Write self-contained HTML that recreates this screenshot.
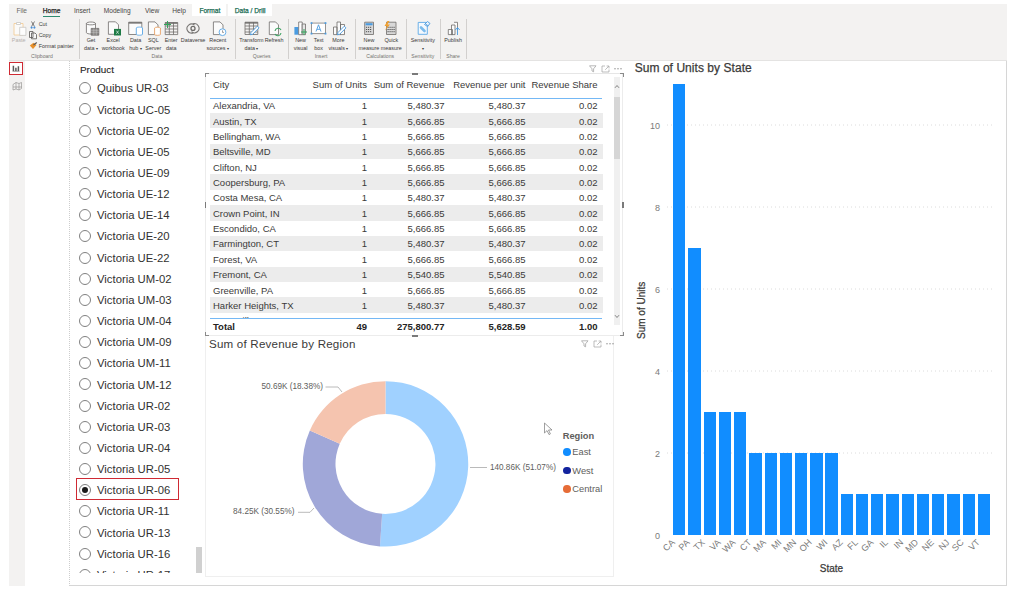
<!DOCTYPE html><html><head><meta charset="utf-8"><style>
*{box-sizing:border-box;margin:0;padding:0}
html,body{width:1024px;height:592px;overflow:hidden;background:#fff;font-family:"Liberation Sans",sans-serif;color:#252423}
.a{position:absolute;white-space:nowrap}
.rb{color:#605e5c}
small{font-size:70%}
</style></head><body>

<div class="a" style="left:9px;top:4px;width:998px;height:56px;background:#f3f2f1"></div>
<div class="a" style="left:192px;top:4px;width:34px;height:12px;background:#ffffff"></div>
<div class="a" style="left:228px;top:4px;width:44px;height:12px;background:#ffffff"></div>
<div class="a" style="left:16.4px;top:6.5px;font-size:6.6px;line-height:8px;color:#6b6967;">File</div>
<div class="a" style="left:42.8px;top:6.5px;font-size:6.6px;line-height:8px;color:#252423;-webkit-text-stroke:0.25px #252423;">Home</div>
<div class="a" style="left:73.9px;top:6.5px;font-size:6.6px;line-height:8px;color:#484644;">Insert</div>
<div class="a" style="left:103.8px;top:6.5px;font-size:6.6px;line-height:8px;color:#484644;">Modeling</div>
<div class="a" style="left:145px;top:6.5px;font-size:6.6px;line-height:8px;color:#484644;">View</div>
<div class="a" style="left:172.3px;top:6.5px;font-size:6.6px;line-height:8px;color:#484644;">Help</div>
<div class="a" style="left:199.4px;top:6.5px;font-size:6.6px;line-height:8px;color:#1c6e55;-webkit-text-stroke:0.25px #1c6e55;">Format</div>
<div class="a" style="left:234.8px;top:6.5px;font-size:6.6px;line-height:8px;color:#1c6e55;-webkit-text-stroke:0.25px #1c6e55;">Data / Drill</div>
<div class="a" style="left:43px;top:15.5px;width:17px;height:1.2px;background:#2e8b6f"></div>
<div class="a" style="left:9px;top:60px;width:998px;height:1px;background:#e4e3e2"></div>
<div class="a" style="left:78.5px;top:19px;width:0.6px;height:40px;background:#d2d0ce"></div>
<div class="a" style="left:235.3px;top:19px;width:0.6px;height:40px;background:#d2d0ce"></div>
<div class="a" style="left:287.7px;top:19px;width:0.6px;height:40px;background:#d2d0ce"></div>
<div class="a" style="left:354.6px;top:19px;width:0.6px;height:40px;background:#d2d0ce"></div>
<div class="a" style="left:405.7px;top:19px;width:0.6px;height:40px;background:#d2d0ce"></div>
<div class="a" style="left:439.6px;top:19px;width:0.6px;height:40px;background:#d2d0ce"></div>
<div class="a" style="left:466.4px;top:19px;width:0.6px;height:40px;background:#d2d0ce"></div>
<div class="a" style="left:-21.30px;width:80px;top:37.00px;font-size:5.4px;line-height:7px;text-align:center;color:#b3b0ad">Paste</div>
<div class="a" style="left:38.70px;top:21.40px;font-size:5.4px;line-height:7px;color:#3b3a39">Cut</div>
<div class="a" style="left:38.70px;top:32.30px;font-size:5.4px;line-height:7px;color:#3b3a39">Copy</div>
<div class="a" style="left:38.70px;top:42.80px;font-size:5.4px;line-height:7px;color:#3b3a39">Format painter</div>
<div class="a" style="left:2.00px;width:80px;top:53.40px;font-size:5.1px;line-height:7px;text-align:center;color:#747270">Clipboard</div>
<div class="a" style="left:51.00px;width:80px;top:37.10px;font-size:5.4px;line-height:7px;text-align:center;color:#3b3a39">Get</div>
<div class="a" style="left:51.00px;width:80px;top:44.50px;font-size:5.4px;line-height:7px;text-align:center;color:#3b3a39">data <small>▾</small></div>
<div class="a" style="left:73.20px;width:80px;top:37.10px;font-size:5.4px;line-height:7px;text-align:center;color:#3b3a39">Excel</div>
<div class="a" style="left:73.20px;width:80px;top:44.50px;font-size:5.4px;line-height:7px;text-align:center;color:#3b3a39">workbook</div>
<div class="a" style="left:95.60px;width:80px;top:37.10px;font-size:5.4px;line-height:7px;text-align:center;color:#3b3a39">Data</div>
<div class="a" style="left:95.60px;width:80px;top:44.50px;font-size:5.4px;line-height:7px;text-align:center;color:#3b3a39">hub <small>▾</small></div>
<div class="a" style="left:113.30px;width:80px;top:37.10px;font-size:5.4px;line-height:7px;text-align:center;color:#3b3a39">SQL</div>
<div class="a" style="left:113.30px;width:80px;top:44.50px;font-size:5.4px;line-height:7px;text-align:center;color:#3b3a39">Server</div>
<div class="a" style="left:131.20px;width:80px;top:37.10px;font-size:5.4px;line-height:7px;text-align:center;color:#3b3a39">Enter</div>
<div class="a" style="left:131.20px;width:80px;top:44.50px;font-size:5.4px;line-height:7px;text-align:center;color:#3b3a39">data</div>
<div class="a" style="left:153.10px;width:80px;top:37.10px;font-size:5.4px;line-height:7px;text-align:center;color:#3b3a39">Dataverse</div>
<div class="a" style="left:177.80px;width:80px;top:37.10px;font-size:5.4px;line-height:7px;text-align:center;color:#3b3a39">Recent</div>
<div class="a" style="left:177.80px;width:80px;top:44.50px;font-size:5.4px;line-height:7px;text-align:center;color:#3b3a39">sources <small>▾</small></div>
<div class="a" style="left:211.40px;width:80px;top:37.10px;font-size:5.4px;line-height:7px;text-align:center;color:#3b3a39">Transform</div>
<div class="a" style="left:211.40px;width:80px;top:44.50px;font-size:5.4px;line-height:7px;text-align:center;color:#3b3a39">data <small>▾</small></div>
<div class="a" style="left:234.10px;width:80px;top:37.10px;font-size:5.4px;line-height:7px;text-align:center;color:#3b3a39">Refresh</div>
<div class="a" style="left:260.60px;width:80px;top:37.10px;font-size:5.4px;line-height:7px;text-align:center;color:#3b3a39">New</div>
<div class="a" style="left:260.60px;width:80px;top:44.50px;font-size:5.4px;line-height:7px;text-align:center;color:#3b3a39">visual</div>
<div class="a" style="left:278.70px;width:80px;top:37.10px;font-size:5.4px;line-height:7px;text-align:center;color:#3b3a39">Text</div>
<div class="a" style="left:278.70px;width:80px;top:44.50px;font-size:5.4px;line-height:7px;text-align:center;color:#3b3a39">box</div>
<div class="a" style="left:298.40px;width:80px;top:37.10px;font-size:5.4px;line-height:7px;text-align:center;color:#3b3a39">More</div>
<div class="a" style="left:298.40px;width:80px;top:44.50px;font-size:5.4px;line-height:7px;text-align:center;color:#3b3a39">visuals <small>▾</small></div>
<div class="a" style="left:328.90px;width:80px;top:37.10px;font-size:5.4px;line-height:7px;text-align:center;color:#3b3a39">New</div>
<div class="a" style="left:328.90px;width:80px;top:44.50px;font-size:5.4px;line-height:7px;text-align:center;color:#3b3a39">measure</div>
<div class="a" style="left:351.30px;width:80px;top:37.10px;font-size:5.4px;line-height:7px;text-align:center;color:#3b3a39">Quick</div>
<div class="a" style="left:351.30px;width:80px;top:44.50px;font-size:5.4px;line-height:7px;text-align:center;color:#3b3a39">measure</div>
<div class="a" style="left:382.80px;width:80px;top:37.10px;font-size:5.4px;line-height:7px;text-align:center;color:#3b3a39">Sensitivity</div>
<div class="a" style="left:382.80px;width:80px;top:44.50px;font-size:5.4px;line-height:7px;text-align:center;color:#3b3a39"><small>▾</small></div>
<div class="a" style="left:413.10px;width:80px;top:37.10px;font-size:5.4px;line-height:7px;text-align:center;color:#3b3a39">Publish</div>
<div class="a" style="left:116.90px;width:80px;top:53.40px;font-size:5.1px;line-height:7px;text-align:center;color:#747270">Data</div>
<div class="a" style="left:221.60px;width:80px;top:53.40px;font-size:5.1px;line-height:7px;text-align:center;color:#747270">Queries</div>
<div class="a" style="left:281.00px;width:80px;top:53.40px;font-size:5.1px;line-height:7px;text-align:center;color:#747270">Insert</div>
<div class="a" style="left:340.20px;width:80px;top:53.40px;font-size:5.1px;line-height:7px;text-align:center;color:#747270">Calculations</div>
<div class="a" style="left:382.80px;width:80px;top:53.40px;font-size:5.1px;line-height:7px;text-align:center;color:#747270">Sensitivity</div>
<div class="a" style="left:413.10px;width:80px;top:53.40px;font-size:5.1px;line-height:7px;text-align:center;color:#747270">Share</div>
<svg class="a" style="left:0;top:0" width="480" height="62" viewBox="0 0 480 62" fill="none" stroke-width="0.8"><path d="M14 23.5 H23 V35 H14 Z" stroke="#f2c98f" fill="#fbfaf9"/><path d="M16.5 22.5 H20.5 V24.5 H16.5 Z" stroke="#c8c6c4" fill="#fff"/><path d="M19.7 27.3 H25.9 V35.4 H19.7 Z" stroke="#c8c6c4" fill="#fdfdfd"/><path d="M31.5 21.5 L34.5 26.5 M34.5 21.5 L31.5 26.5" stroke="#5a5856"/><circle cx="31.6" cy="27.6" r="1.1" fill="#4a90d9" stroke="none"/><circle cx="34.4" cy="27.6" r="1.1" fill="#4a90d9" stroke="none"/><path d="M29.5 31.5 H33 V37.5 H29.5 Z M31.5 33 H35 L36.5 34.5 V38.8 H31.5 Z" stroke="#5a5856" fill="#f8f8f8"/><path d="M29.8 45.5 L33 49 L36.5 45 L33.5 42.8 Z" fill="#e8912d" stroke="none"/><path d="M33.5 45 L36.8 42.5" stroke="#5a5856" stroke-width="1.1"/><path d="M86.4 23.5 V32.5 C86.4 34.5 95.5 34.5 95.5 32.5 V23.5 C95.5 21.5 86.4 21.5 86.4 23.5 Z" stroke="#6e6c6a" fill="#fbfbfb"/><path d="M86.4 23.5 C86.4 25.3 95.5 25.3 95.5 23.5" stroke="#6e6c6a"/><path d="M91.2 28.4 H98.8 V35.2 H91.2 Z" fill="#8a8886" stroke="#6e6c6a"/><path d="M91.2 30.3 H98.8 M91.2 32.3 H98.8 M93.8 28.4 V35.2 M96.3 28.4 V35.2" stroke="#d8d8d8" stroke-width="0.4"/><path d="M108.4 21.8 H115.5 L118.5 24.8 V34.3 H108.4 Z" stroke="#6e6c6a" fill="#fbfbfb"/><path d="M114 28.9 H121 V35.5 H114 Z" fill="#1d7a45" stroke="none"/><path d="M116.3 30.6 L118.7 33.8 M118.7 30.6 L116.3 33.8" stroke="#fff" stroke-width="0.6"/><path d="M128.7 22.2 H141.8 V34.5 H128.7 Z" stroke="#6e6c6a" fill="#fbfbfb"/><path d="M128.7 22.2 H141.8 V23.6 H128.7 Z" fill="#6e6c6a" stroke="none"/><path d="M136.3 28 V34.3 C136.3 35.5 142.5 35.5 142.5 34.3 V28 C142.5 26.8 136.3 26.8 136.3 28 Z" stroke="#5aa7e6" fill="#fff" stroke-width="0.9"/><path d="M148.4 21.9 H155 L158 24.9 V34.6 H148.4 Z" stroke="#6e6c6a" fill="#fbfbfb"/><path d="M154.6 28 V34.5 C154.6 35.6 160.4 35.6 160.4 34.5 V28 C160.4 26.9 154.6 26.9 154.6 28 Z" stroke="#e8a064" fill="#fff" stroke-width="0.9"/><path d="M165.2 22.5 H177.7 V34.6 H165.2 Z M165.2 26 H177.7 M165.2 29 H177.7 M165.2 32 H177.7 M169.3 22.5 V34.6 M173.5 22.5 V34.6" stroke="#6e6c6a" fill="none"/><path d="M165.2 22.5 H177.7 V23.8 H165.2 Z" fill="#6e6c6a" stroke="none"/><path d="M164 24.5 H171 M167.5 21 V28" stroke="#33a35a" stroke-width="1"/><path d="M194.56 25.08 A4.6 4.6 0 1 0 193.17 32.92" stroke="#7a7876" stroke-width="1.1"/><path d="M191.44 31.72 A4.6 4.6 0 1 0 192.83 23.88" stroke="#7a7876" stroke-width="1.1"/><circle cx="193" cy="28.4" r="2" stroke="#6e6c6a" stroke-width="1.3"/><path d="M213.4 21.9 H220 L223 24.9 V34.6 H213.4 Z" stroke="#6e6c6a" fill="#fbfbfb"/><circle cx="222.5" cy="32.2" r="3.4" stroke="#5aa7e6" fill="#fff" stroke-width="0.9"/><path d="M222.5 30.3 V32.4 H224" stroke="#444" stroke-width="0.5"/><path d="M245 22.2 H257.8 V34.5 H245 Z M245 26 H257.8 M245 29 H257.8 M245 32 H257.8 M249.3 22.2 V34.5 M253.5 22.2 V34.5" stroke="#6e6c6a"/><path d="M245 22.2 H257.8 V23.6 H245 Z" fill="#6e6c6a" stroke="none"/><path d="M250.5 34.8 L251 32.5 L257.3 26.2 L259 27.9 L252.7 34.2 Z" fill="#fff" stroke="#4a9be0" stroke-width="0.9"/><path d="M269.3 21.9 H275.5 L278.5 24.9 V34.6 H269.3 Z" stroke="#6e6c6a" fill="#fbfbfb"/><path d="M275 31 A3.2 3.2 0 0 1 281 30 M281 33 A3.2 3.2 0 0 1 275 34" stroke="#3fa365" stroke-width="1.1" fill="none"/><path d="M294.4 27 H298.7 V34.7 H294.4 Z" fill="#4a9be0" stroke="none"/><path d="M298.7 22 H302.2 V34.7 H298.7 Z" stroke="#6e6c6a" fill="#fff"/><path d="M302.2 24 H305.5 V34.7 H302.2 Z" stroke="#6e6c6a" fill="#e6e6e6"/><path d="M301 32 H307 M304 29 V35" stroke="#33a35a" stroke-width="1"/><path d="M311.5 23.1 H325.5 V33.6 H311.5 Z" stroke="#8a8886" fill="#fff" stroke-width="0.9"/><path d="M316 31.5 L318.5 24.8 L321 31.5 M317 29.3 H320" stroke="#4a9be0" stroke-width="0.9"/><rect x="310.6" y="22.2" width="1.8" height="1.8" fill="#4a9be0"/><rect x="324.6" y="22.2" width="1.8" height="1.8" fill="#4a9be0"/><rect x="310.6" y="32.7" width="1.8" height="1.8" fill="#4a9be0"/><rect x="324.6" y="32.7" width="1.8" height="1.8" fill="#4a9be0"/><path d="M333.5 27 H337 V34.6 H333.5 Z M337 22 H340.5 V34.6 H337 Z M340.5 24.5 H344.5 V34.6 H340.5 Z" stroke="#6e6c6a" fill="#fbfbfb"/><path d="M337.5 34.8 L338 32.5 L344.3 26.2 L346 27.9 L339.7 34.2 Z" fill="#fff" stroke="#4a9be0" stroke-width="0.9"/><path d="M364.7 22.2 H373.5 V34.5 H364.7 Z" stroke="#6e6c6a" fill="#d8d8d8"/><path d="M365.6 23.2 H372.6 V25.3 H365.6 Z" fill="#4a9be0" stroke="none"/><path d="M366 27.3 H372 M366 29.5 H372 M366 31.7 H372" stroke="#444" stroke-width="0.9" stroke-dasharray="1.2 0.8"/><path d="M386.5 22.2 H396 V34.5 H386.5 Z" stroke="#6e6c6a" fill="#d8d8d8"/><path d="M387.5 27.3 H395 M387.5 29.5 H395 M387.5 31.7 H395" stroke="#444" stroke-width="0.9" stroke-dasharray="1.2 0.8"/><path d="M387.5 21 L384.5 26 H387 L385 30.5 L390 24.5 H387.5 L389.5 21 Z" fill="#f0a030" stroke="none"/><path d="M418.2 22.4 H427.3 V34.3 H418.2 Z" stroke="#6ab0e8" fill="#f4f9fd" stroke-width="1"/><path d="M421 27.5 L424.5 31" stroke="#7cbcec" stroke-width="2.6" stroke-linecap="round"/><path d="M424.5 24.5 L427.5 21.5 L430 23.5 L427.5 26.5 Z" stroke="#4a9be0" stroke-width="0.9" fill="#e8f3fc"/><path d="M425.5 23.8 L428.3 26" stroke="#3a8bd0" stroke-width="0.7"/><path d="M448.3 29.5 H452.5 V34.6 H448.3 Z M451.5 25 H455 V34.6 H451.5 Z M454 22.3 H457.5 V30" stroke="#6e6c6a" fill="#fbfbfb"/><path d="M457.5 35 V28 M455.3 30 L457.5 27.5 L459.7 30" stroke="#4a9be0" stroke-width="0.9"/></svg>
<div class="a" style="left:9px;top:61px;width:16px;height:525px;background:#f3f2f1"></div>
<div class="a" style="left:9px;top:62px;width:14px;height:13px;border:1.6px solid #cf2a33;background:#fff"></div>
<svg class="a" style="left:10px;top:63px" width="14" height="32" viewBox="0 0 14 32"><path d="M3.4 2.8 V8 M5.9 4.8 V8 M8.4 3.3 V8" stroke="#5a5a5a" stroke-width="1.5"/><path d="M2.5 8.3 H9.5" stroke="#5a5a5a" stroke-width="0.6"/><path d="M3 21.5 L6 19.5 L9 20.5 L11.5 19.5 V25.5 L9 27 L6 26 L3 27 Z M6 19.5 V26 M9 20.5 V27 M3 24 H11.5" stroke="#8a8886" stroke-width="0.6" fill="none"/></svg>
<div class="a" style="left:69px;top:61px;width:938px;height:525px;border-left:1px dotted #cdcdcd;border-right:1px solid #d6d6d6;border-bottom:1px solid #d6d6d6"></div>
<div class="a" style="left:80px;top:64px;font-size:9.9px;line-height:11px;-webkit-text-stroke:0.1px #252423;color:#252423">Product</div>
<div class="a" style="left:70px;top:76px;width:130px;height:497px;overflow:hidden">
<div class="a" style="left:9px;top:6.30px;width:12px;height:12px;border-radius:50%;border:1px solid #808080"></div>
<div class="a" style="left:27px;top:5.40px;font-size:11.3px;line-height:14px;color:#323130">Quibus UR-03</div>
<div class="a" style="left:9px;top:27.45px;width:12px;height:12px;border-radius:50%;border:1px solid #808080"></div>
<div class="a" style="left:27px;top:26.55px;font-size:11.3px;line-height:14px;color:#323130">Victoria UC-05</div>
<div class="a" style="left:9px;top:48.60px;width:12px;height:12px;border-radius:50%;border:1px solid #808080"></div>
<div class="a" style="left:27px;top:47.70px;font-size:11.3px;line-height:14px;color:#323130">Victoria UE-02</div>
<div class="a" style="left:9px;top:69.75px;width:12px;height:12px;border-radius:50%;border:1px solid #808080"></div>
<div class="a" style="left:27px;top:68.85px;font-size:11.3px;line-height:14px;color:#323130">Victoria UE-05</div>
<div class="a" style="left:9px;top:90.90px;width:12px;height:12px;border-radius:50%;border:1px solid #808080"></div>
<div class="a" style="left:27px;top:90.00px;font-size:11.3px;line-height:14px;color:#323130">Victoria UE-09</div>
<div class="a" style="left:9px;top:112.05px;width:12px;height:12px;border-radius:50%;border:1px solid #808080"></div>
<div class="a" style="left:27px;top:111.15px;font-size:11.3px;line-height:14px;color:#323130">Victoria UE-12</div>
<div class="a" style="left:9px;top:133.20px;width:12px;height:12px;border-radius:50%;border:1px solid #808080"></div>
<div class="a" style="left:27px;top:132.30px;font-size:11.3px;line-height:14px;color:#323130">Victoria UE-14</div>
<div class="a" style="left:9px;top:154.35px;width:12px;height:12px;border-radius:50%;border:1px solid #808080"></div>
<div class="a" style="left:27px;top:153.45px;font-size:11.3px;line-height:14px;color:#323130">Victoria UE-20</div>
<div class="a" style="left:9px;top:175.50px;width:12px;height:12px;border-radius:50%;border:1px solid #808080"></div>
<div class="a" style="left:27px;top:174.60px;font-size:11.3px;line-height:14px;color:#323130">Victoria UE-22</div>
<div class="a" style="left:9px;top:196.65px;width:12px;height:12px;border-radius:50%;border:1px solid #808080"></div>
<div class="a" style="left:27px;top:195.75px;font-size:11.3px;line-height:14px;color:#323130">Victoria UM-02</div>
<div class="a" style="left:9px;top:217.80px;width:12px;height:12px;border-radius:50%;border:1px solid #808080"></div>
<div class="a" style="left:27px;top:216.90px;font-size:11.3px;line-height:14px;color:#323130">Victoria UM-03</div>
<div class="a" style="left:9px;top:238.95px;width:12px;height:12px;border-radius:50%;border:1px solid #808080"></div>
<div class="a" style="left:27px;top:238.05px;font-size:11.3px;line-height:14px;color:#323130">Victoria UM-04</div>
<div class="a" style="left:9px;top:260.10px;width:12px;height:12px;border-radius:50%;border:1px solid #808080"></div>
<div class="a" style="left:27px;top:259.20px;font-size:11.3px;line-height:14px;color:#323130">Victoria UM-09</div>
<div class="a" style="left:9px;top:281.25px;width:12px;height:12px;border-radius:50%;border:1px solid #808080"></div>
<div class="a" style="left:27px;top:280.35px;font-size:11.3px;line-height:14px;color:#323130">Victoria UM-11</div>
<div class="a" style="left:9px;top:302.40px;width:12px;height:12px;border-radius:50%;border:1px solid #808080"></div>
<div class="a" style="left:27px;top:301.50px;font-size:11.3px;line-height:14px;color:#323130">Victoria UM-12</div>
<div class="a" style="left:9px;top:323.55px;width:12px;height:12px;border-radius:50%;border:1px solid #808080"></div>
<div class="a" style="left:27px;top:322.65px;font-size:11.3px;line-height:14px;color:#323130">Victoria UR-02</div>
<div class="a" style="left:9px;top:344.70px;width:12px;height:12px;border-radius:50%;border:1px solid #808080"></div>
<div class="a" style="left:27px;top:343.80px;font-size:11.3px;line-height:14px;color:#323130">Victoria UR-03</div>
<div class="a" style="left:9px;top:365.85px;width:12px;height:12px;border-radius:50%;border:1px solid #808080"></div>
<div class="a" style="left:27px;top:364.95px;font-size:11.3px;line-height:14px;color:#323130">Victoria UR-04</div>
<div class="a" style="left:9px;top:387.00px;width:12px;height:12px;border-radius:50%;border:1px solid #808080"></div>
<div class="a" style="left:27px;top:386.10px;font-size:11.3px;line-height:14px;color:#323130">Victoria UR-05</div>
<div class="a" style="left:9px;top:408.15px;width:12px;height:12px;border-radius:50%;border:1px solid #808080"></div>
<div class="a" style="left:12px;top:411.15px;width:6px;height:6px;border-radius:50%;background:#1b1b1b"></div>
<div class="a" style="left:27px;top:407.25px;font-size:11.3px;line-height:14px;color:#323130">Victoria UR-06</div>
<div class="a" style="left:9px;top:429.30px;width:12px;height:12px;border-radius:50%;border:1px solid #808080"></div>
<div class="a" style="left:27px;top:428.40px;font-size:11.3px;line-height:14px;color:#323130">Victoria UR-11</div>
<div class="a" style="left:9px;top:450.45px;width:12px;height:12px;border-radius:50%;border:1px solid #808080"></div>
<div class="a" style="left:27px;top:449.55px;font-size:11.3px;line-height:14px;color:#323130">Victoria UR-13</div>
<div class="a" style="left:9px;top:471.60px;width:12px;height:12px;border-radius:50%;border:1px solid #808080"></div>
<div class="a" style="left:27px;top:470.70px;font-size:11.3px;line-height:14px;color:#323130">Victoria UR-16</div>
<div class="a" style="left:9px;top:492.75px;width:12px;height:12px;border-radius:50%;border:1px solid #808080"></div>
<div class="a" style="left:27px;top:491.85px;font-size:11.3px;line-height:14px;color:#323130">Victoria UR-17</div>
</div>
<div class="a" style="left:76.3px;top:478.2px;width:103px;height:22px;border:1.6px solid #cf2a33"></div>
<div class="a" style="left:195.6px;top:547px;width:6px;height:25.7px;background:#d0d0d0"></div>
<div class="a" style="left:205px;top:73px;width:418px;height:263px;border:1px solid #ececec;border-top-color:#e6e6e6"></div>
<div class="a" style="left:204.5px;top:73px;width:4px;height:4px;border-left:1.3px solid #8a8a8a;border-top:1.3px solid #8a8a8a"></div>
<div class="a" style="left:619.5px;top:73px;width:4px;height:4px;border-right:1.3px solid #8a8a8a;border-top:1.3px solid #8a8a8a"></div>
<div class="a" style="left:204.5px;top:332px;width:4px;height:4px;border-left:1.3px solid #8a8a8a;border-bottom:1.3px solid #8a8a8a"></div>
<div class="a" style="left:619.5px;top:332px;width:4px;height:4px;border-right:1.3px solid #8a8a8a;border-bottom:1.3px solid #8a8a8a"></div>
<div class="a" style="left:411.6px;top:73.2px;width:6px;height:1.6px;background:#7a7a7a"></div>
<div class="a" style="left:411.6px;top:335.2px;width:6px;height:1.6px;background:#7a7a7a"></div>
<div class="a" style="left:204.7px;top:202.4px;width:1.6px;height:5.5px;background:#7a7a7a"></div>
<div class="a" style="left:622.4px;top:202.4px;width:1.6px;height:5.5px;background:#7a7a7a"></div>
<svg class="a" style="left:589px;top:65px" width="34" height="8" viewBox="0 0 34 8"><path d="M0.5 0.8 H7 L4.6 3.8 V6.8 L3 6 V3.8 Z" fill="none" stroke="#9a9a9a" stroke-width="0.7"/><path d="M16 1 H13 V7 H20 V4.5" fill="none" stroke="#a0a0a0" stroke-width="0.7"/><path d="M16.2 4.8 L19.8 1.2 M17.6 1 H20 V3.4" fill="none" stroke="#a0a0a0" stroke-width="0.7"/><circle cx="26" cy="3.8" r="0.7" fill="#8a8a8a"/><circle cx="29" cy="3.8" r="0.7" fill="#8a8a8a"/><circle cx="32" cy="3.8" r="0.7" fill="#8a8a8a"/></svg>
<div class="a" style="left:213px;top:79.2px;font-size:9.5px;line-height:11px;color:#3b3a39;">City</div>
<div class="a" style="right:657px;top:79.2px;font-size:9.5px;line-height:11px;color:#3b3a39;text-align:right;">Sum of Units</div>
<div class="a" style="right:579.5px;top:79.2px;font-size:9.5px;line-height:11px;color:#3b3a39;text-align:right;">Sum of Revenue</div>
<div class="a" style="right:498.5px;top:79.2px;font-size:9.5px;line-height:11px;color:#3b3a39;text-align:right;">Revenue per unit</div>
<div class="a" style="right:426.5px;top:79.2px;font-size:9.5px;line-height:11px;color:#3b3a39;text-align:right;">Revenue Share</div>
<div class="a" style="left:209.5px;top:97.6px;width:392.5px;height:1.2px;background:#74b8f5"></div>
<div class="a" style="left:209.5px;top:98.8px;width:393px;height:219.4px;overflow:hidden">
<div class="a" style="left:3.5px;top:1.55px;font-size:9.5px;line-height:11px;color:#3b3a39">Alexandria, VA</div>
<div class="a" style="right:235.5px;top:1.55px;font-size:9.5px;line-height:11px;color:#3b3a39;text-align:right">1</div>
<div class="a" style="right:158.0px;top:1.55px;font-size:9.5px;line-height:11px;color:#3b3a39;text-align:right">5,480.37</div>
<div class="a" style="right:77.0px;top:1.55px;font-size:9.5px;line-height:11px;color:#3b3a39;text-align:right">5,480.37</div>
<div class="a" style="right:5.0px;top:1.55px;font-size:9.5px;line-height:11px;color:#3b3a39;text-align:right">0.02</div>
<div class="a" style="left:0;top:14.30px;width:393px;height:15.35px;background:#ececec"></div>
<div class="a" style="left:3.5px;top:16.90px;font-size:9.5px;line-height:11px;color:#3b3a39">Austin, TX</div>
<div class="a" style="right:235.5px;top:16.90px;font-size:9.5px;line-height:11px;color:#3b3a39;text-align:right">1</div>
<div class="a" style="right:158.0px;top:16.90px;font-size:9.5px;line-height:11px;color:#3b3a39;text-align:right">5,666.85</div>
<div class="a" style="right:77.0px;top:16.90px;font-size:9.5px;line-height:11px;color:#3b3a39;text-align:right">5,666.85</div>
<div class="a" style="right:5.0px;top:16.90px;font-size:9.5px;line-height:11px;color:#3b3a39;text-align:right">0.02</div>
<div class="a" style="left:3.5px;top:32.25px;font-size:9.5px;line-height:11px;color:#3b3a39">Bellingham, WA</div>
<div class="a" style="right:235.5px;top:32.25px;font-size:9.5px;line-height:11px;color:#3b3a39;text-align:right">1</div>
<div class="a" style="right:158.0px;top:32.25px;font-size:9.5px;line-height:11px;color:#3b3a39;text-align:right">5,666.85</div>
<div class="a" style="right:77.0px;top:32.25px;font-size:9.5px;line-height:11px;color:#3b3a39;text-align:right">5,666.85</div>
<div class="a" style="right:5.0px;top:32.25px;font-size:9.5px;line-height:11px;color:#3b3a39;text-align:right">0.02</div>
<div class="a" style="left:0;top:45.00px;width:393px;height:15.35px;background:#ececec"></div>
<div class="a" style="left:3.5px;top:47.60px;font-size:9.5px;line-height:11px;color:#3b3a39">Beltsville, MD</div>
<div class="a" style="right:235.5px;top:47.60px;font-size:9.5px;line-height:11px;color:#3b3a39;text-align:right">1</div>
<div class="a" style="right:158.0px;top:47.60px;font-size:9.5px;line-height:11px;color:#3b3a39;text-align:right">5,666.85</div>
<div class="a" style="right:77.0px;top:47.60px;font-size:9.5px;line-height:11px;color:#3b3a39;text-align:right">5,666.85</div>
<div class="a" style="right:5.0px;top:47.60px;font-size:9.5px;line-height:11px;color:#3b3a39;text-align:right">0.02</div>
<div class="a" style="left:3.5px;top:62.95px;font-size:9.5px;line-height:11px;color:#3b3a39">Clifton, NJ</div>
<div class="a" style="right:235.5px;top:62.95px;font-size:9.5px;line-height:11px;color:#3b3a39;text-align:right">1</div>
<div class="a" style="right:158.0px;top:62.95px;font-size:9.5px;line-height:11px;color:#3b3a39;text-align:right">5,666.85</div>
<div class="a" style="right:77.0px;top:62.95px;font-size:9.5px;line-height:11px;color:#3b3a39;text-align:right">5,666.85</div>
<div class="a" style="right:5.0px;top:62.95px;font-size:9.5px;line-height:11px;color:#3b3a39;text-align:right">0.02</div>
<div class="a" style="left:0;top:75.70px;width:393px;height:15.35px;background:#ececec"></div>
<div class="a" style="left:3.5px;top:78.30px;font-size:9.5px;line-height:11px;color:#3b3a39">Coopersburg, PA</div>
<div class="a" style="right:235.5px;top:78.30px;font-size:9.5px;line-height:11px;color:#3b3a39;text-align:right">1</div>
<div class="a" style="right:158.0px;top:78.30px;font-size:9.5px;line-height:11px;color:#3b3a39;text-align:right">5,666.85</div>
<div class="a" style="right:77.0px;top:78.30px;font-size:9.5px;line-height:11px;color:#3b3a39;text-align:right">5,666.85</div>
<div class="a" style="right:5.0px;top:78.30px;font-size:9.5px;line-height:11px;color:#3b3a39;text-align:right">0.02</div>
<div class="a" style="left:3.5px;top:93.65px;font-size:9.5px;line-height:11px;color:#3b3a39">Costa Mesa, CA</div>
<div class="a" style="right:235.5px;top:93.65px;font-size:9.5px;line-height:11px;color:#3b3a39;text-align:right">1</div>
<div class="a" style="right:158.0px;top:93.65px;font-size:9.5px;line-height:11px;color:#3b3a39;text-align:right">5,480.37</div>
<div class="a" style="right:77.0px;top:93.65px;font-size:9.5px;line-height:11px;color:#3b3a39;text-align:right">5,480.37</div>
<div class="a" style="right:5.0px;top:93.65px;font-size:9.5px;line-height:11px;color:#3b3a39;text-align:right">0.02</div>
<div class="a" style="left:0;top:106.40px;width:393px;height:15.35px;background:#ececec"></div>
<div class="a" style="left:3.5px;top:109.00px;font-size:9.5px;line-height:11px;color:#3b3a39">Crown Point, IN</div>
<div class="a" style="right:235.5px;top:109.00px;font-size:9.5px;line-height:11px;color:#3b3a39;text-align:right">1</div>
<div class="a" style="right:158.0px;top:109.00px;font-size:9.5px;line-height:11px;color:#3b3a39;text-align:right">5,666.85</div>
<div class="a" style="right:77.0px;top:109.00px;font-size:9.5px;line-height:11px;color:#3b3a39;text-align:right">5,666.85</div>
<div class="a" style="right:5.0px;top:109.00px;font-size:9.5px;line-height:11px;color:#3b3a39;text-align:right">0.02</div>
<div class="a" style="left:3.5px;top:124.35px;font-size:9.5px;line-height:11px;color:#3b3a39">Escondido, CA</div>
<div class="a" style="right:235.5px;top:124.35px;font-size:9.5px;line-height:11px;color:#3b3a39;text-align:right">1</div>
<div class="a" style="right:158.0px;top:124.35px;font-size:9.5px;line-height:11px;color:#3b3a39;text-align:right">5,666.85</div>
<div class="a" style="right:77.0px;top:124.35px;font-size:9.5px;line-height:11px;color:#3b3a39;text-align:right">5,666.85</div>
<div class="a" style="right:5.0px;top:124.35px;font-size:9.5px;line-height:11px;color:#3b3a39;text-align:right">0.02</div>
<div class="a" style="left:0;top:137.10px;width:393px;height:15.35px;background:#ececec"></div>
<div class="a" style="left:3.5px;top:139.70px;font-size:9.5px;line-height:11px;color:#3b3a39">Farmington, CT</div>
<div class="a" style="right:235.5px;top:139.70px;font-size:9.5px;line-height:11px;color:#3b3a39;text-align:right">1</div>
<div class="a" style="right:158.0px;top:139.70px;font-size:9.5px;line-height:11px;color:#3b3a39;text-align:right">5,480.37</div>
<div class="a" style="right:77.0px;top:139.70px;font-size:9.5px;line-height:11px;color:#3b3a39;text-align:right">5,480.37</div>
<div class="a" style="right:5.0px;top:139.70px;font-size:9.5px;line-height:11px;color:#3b3a39;text-align:right">0.02</div>
<div class="a" style="left:3.5px;top:155.05px;font-size:9.5px;line-height:11px;color:#3b3a39">Forest, VA</div>
<div class="a" style="right:235.5px;top:155.05px;font-size:9.5px;line-height:11px;color:#3b3a39;text-align:right">1</div>
<div class="a" style="right:158.0px;top:155.05px;font-size:9.5px;line-height:11px;color:#3b3a39;text-align:right">5,666.85</div>
<div class="a" style="right:77.0px;top:155.05px;font-size:9.5px;line-height:11px;color:#3b3a39;text-align:right">5,666.85</div>
<div class="a" style="right:5.0px;top:155.05px;font-size:9.5px;line-height:11px;color:#3b3a39;text-align:right">0.02</div>
<div class="a" style="left:0;top:167.80px;width:393px;height:15.35px;background:#ececec"></div>
<div class="a" style="left:3.5px;top:170.40px;font-size:9.5px;line-height:11px;color:#3b3a39">Fremont, CA</div>
<div class="a" style="right:235.5px;top:170.40px;font-size:9.5px;line-height:11px;color:#3b3a39;text-align:right">1</div>
<div class="a" style="right:158.0px;top:170.40px;font-size:9.5px;line-height:11px;color:#3b3a39;text-align:right">5,540.85</div>
<div class="a" style="right:77.0px;top:170.40px;font-size:9.5px;line-height:11px;color:#3b3a39;text-align:right">5,540.85</div>
<div class="a" style="right:5.0px;top:170.40px;font-size:9.5px;line-height:11px;color:#3b3a39;text-align:right">0.02</div>
<div class="a" style="left:3.5px;top:185.75px;font-size:9.5px;line-height:11px;color:#3b3a39">Greenville, PA</div>
<div class="a" style="right:235.5px;top:185.75px;font-size:9.5px;line-height:11px;color:#3b3a39;text-align:right">1</div>
<div class="a" style="right:158.0px;top:185.75px;font-size:9.5px;line-height:11px;color:#3b3a39;text-align:right">5,666.85</div>
<div class="a" style="right:77.0px;top:185.75px;font-size:9.5px;line-height:11px;color:#3b3a39;text-align:right">5,666.85</div>
<div class="a" style="right:5.0px;top:185.75px;font-size:9.5px;line-height:11px;color:#3b3a39;text-align:right">0.02</div>
<div class="a" style="left:0;top:198.50px;width:393px;height:15.35px;background:#ececec"></div>
<div class="a" style="left:3.5px;top:201.10px;font-size:9.5px;line-height:11px;color:#3b3a39">Harker Heights, TX</div>
<div class="a" style="right:235.5px;top:201.10px;font-size:9.5px;line-height:11px;color:#3b3a39;text-align:right">1</div>
<div class="a" style="right:158.0px;top:201.10px;font-size:9.5px;line-height:11px;color:#3b3a39;text-align:right">5,480.37</div>
<div class="a" style="right:77.0px;top:201.10px;font-size:9.5px;line-height:11px;color:#3b3a39;text-align:right">5,480.37</div>
<div class="a" style="right:5.0px;top:201.10px;font-size:9.5px;line-height:11px;color:#3b3a39;text-align:right">0.02</div>
<div class="a" style="left:3.5px;top:216.45px;font-size:9.5px;line-height:11px;color:#3b3a39">Huntsville, AL</div>
<div class="a" style="right:235.5px;top:216.45px;font-size:9.5px;line-height:11px;color:#3b3a39;text-align:right">1</div>
<div class="a" style="right:158.0px;top:216.45px;font-size:9.5px;line-height:11px;color:#3b3a39;text-align:right">5,666.85</div>
<div class="a" style="right:77.0px;top:216.45px;font-size:9.5px;line-height:11px;color:#3b3a39;text-align:right">5,666.85</div>
<div class="a" style="right:5.0px;top:216.45px;font-size:9.5px;line-height:11px;color:#3b3a39;text-align:right">0.02</div>
</div>
<div class="a" style="left:209.5px;top:318px;width:392.5px;height:1.2px;background:#74b8f5"></div>
<div class="a" style="left:213px;top:321px;font-size:9.5px;line-height:11px;color:#252423;font-weight:bold;">Total</div>
<div class="a" style="right:657px;top:321px;font-size:9.5px;line-height:11px;color:#252423;text-align:right;font-weight:bold;">49</div>
<div class="a" style="right:579.5px;top:321px;font-size:9.5px;line-height:11px;color:#252423;text-align:right;font-weight:bold;">275,800.77</div>
<div class="a" style="right:498.5px;top:321px;font-size:9.5px;line-height:11px;color:#252423;text-align:right;font-weight:bold;">5,628.59</div>
<div class="a" style="right:426.5px;top:321px;font-size:9.5px;line-height:11px;color:#252423;text-align:right;font-weight:bold;">1.00</div>
<div class="a" style="left:614px;top:77px;width:6px;height:248px;background:#f0f0f0"></div>
<div class="a" style="left:614px;top:97px;width:6px;height:62px;background:#d6d6d6"></div>
<svg class="a" style="left:614px;top:84px" width="6" height="5" viewBox="0 0 6 5"><path d="M1 3.8 L3 1.5 L5 3.8" fill="none" stroke="#666" stroke-width="0.8"/></svg>
<svg class="a" style="left:614px;top:314px" width="6" height="5" viewBox="0 0 6 5"><path d="M1 1.2 L3 3.5 L5 1.2" fill="none" stroke="#666" stroke-width="0.8"/></svg>
<div class="a" style="left:205px;top:336px;width:408.5px;height:241px;border-left:1px solid #efefef;border-right:1px solid #efefef;border-bottom:1px solid #efefef"></div>
<div class="a" style="left:209px;top:336.6px;font-size:11.6px;line-height:13px;letter-spacing:0.2px;color:#3b3a39">Sum of Revenue by Region</div>
<svg class="a" style="left:581px;top:340px" width="34" height="8" viewBox="0 0 34 8"><path d="M0.5 0.8 H7 L4.6 3.8 V6.8 L3 6 V3.8 Z" fill="none" stroke="#9a9a9a" stroke-width="0.7"/><path d="M16 1 H13 V7 H20 V4.5" fill="none" stroke="#a0a0a0" stroke-width="0.7"/><path d="M16.2 4.8 L19.8 1.2 M17.6 1 H20 V3.4" fill="none" stroke="#a0a0a0" stroke-width="0.7"/><circle cx="26" cy="3.8" r="0.7" fill="#8a8a8a"/><circle cx="29" cy="3.8" r="0.7" fill="#8a8a8a"/><circle cx="32" cy="3.8" r="0.7" fill="#8a8a8a"/></svg>
<svg class="a" style="left:0;top:0" width="1024" height="592" viewBox="0 0 1024 592"><path d="M385.50 381.20 A82.7 82.7 0 1 1 379.94 546.41 L382.14 513.79 A50 50 0 1 0 385.50 413.90 Z" fill="#a0d1ff"/><path d="M379.94 546.41 A82.7 82.7 0 0 1 309.85 430.48 L339.76 443.70 A50 50 0 0 0 382.14 513.79 Z" fill="#a0a7d8"/><path d="M309.85 430.48 A82.7 82.7 0 0 1 385.50 381.20 L385.50 413.90 A50 50 0 0 0 339.76 443.70 Z" fill="#f5c4af"/><path d="M325.5 387 H338 L342 392" fill="none" stroke="#a8a8a8" stroke-width="0.8"/><path d="M298 512.3 H310 L314 508" fill="none" stroke="#a8a8a8" stroke-width="0.8"/><path d="M470 467.5 H487" fill="none" stroke="#a8a8a8" stroke-width="0.8"/></svg>
<div class="a" style="left:261.5px;top:382px;font-size:8.2px;line-height:10px;color:#605e5c">50.69K (18.38%)</div>
<div class="a" style="left:233px;top:507.3px;font-size:8.2px;line-height:10px;color:#605e5c">84.25K (30.55%)</div>
<div class="a" style="left:489.9px;top:462.5px;font-size:8.2px;line-height:10px;color:#605e5c">140.86K (51.07%)</div>
<div class="a" style="left:562.7px;top:431px;font-size:9.3px;line-height:11px;font-weight:bold;color:#605e5c">Region</div>
<div class="a" style="left:563.1px;top:448.10px;width:7.6px;height:7.6px;border-radius:50%;background:#118dff"></div>
<div class="a" style="left:572.3px;top:447.10px;font-size:9.3px;line-height:11px;color:#605e5c">East</div>
<div class="a" style="left:563.1px;top:466.70px;width:7.6px;height:7.6px;border-radius:50%;background:#12239e"></div>
<div class="a" style="left:572.3px;top:465.70px;font-size:9.3px;line-height:11px;color:#605e5c">West</div>
<div class="a" style="left:563.1px;top:485.20px;width:7.6px;height:7.6px;border-radius:50%;background:#e66c37"></div>
<div class="a" style="left:572.3px;top:484.20px;font-size:9.3px;line-height:11px;color:#605e5c">Central</div>
<svg class="a" style="left:543px;top:422px" width="10" height="14" viewBox="0 0 10 14"><path d="M1.5 1 V11 L4 8.6 L6 12.6 L7.4 11.9 L5.5 8 H9 Z" fill="#fff" stroke="#777" stroke-width="0.7"/></svg>
<div class="a" style="left:634.7px;top:61.9px;font-size:12px;line-height:13px;letter-spacing:0.05px;-webkit-text-stroke:0.25px #3b3a39;color:#3b3a39">Sum of Units by State</div>
<div class="a" style="right:364px;top:531.10px;font-size:9px;line-height:10px;color:#7a7a7a;text-align:right">0</div>
<div class="a" style="right:364px;top:449.10px;font-size:9px;line-height:10px;color:#7a7a7a;text-align:right">2</div>
<svg class="a" style="left:667px;top:452.30px" width="328" height="2"><path d="M0 1 H328" stroke="#d8d8d8" stroke-width="0.9" stroke-dasharray="1 3"/></svg>
<div class="a" style="right:364px;top:367.10px;font-size:9px;line-height:10px;color:#7a7a7a;text-align:right">4</div>
<svg class="a" style="left:667px;top:370.30px" width="328" height="2"><path d="M0 1 H328" stroke="#d8d8d8" stroke-width="0.9" stroke-dasharray="1 3"/></svg>
<div class="a" style="right:364px;top:285.10px;font-size:9px;line-height:10px;color:#7a7a7a;text-align:right">6</div>
<svg class="a" style="left:667px;top:288.30px" width="328" height="2"><path d="M0 1 H328" stroke="#d8d8d8" stroke-width="0.9" stroke-dasharray="1 3"/></svg>
<div class="a" style="right:364px;top:203.10px;font-size:9px;line-height:10px;color:#7a7a7a;text-align:right">8</div>
<svg class="a" style="left:667px;top:206.30px" width="328" height="2"><path d="M0 1 H328" stroke="#d8d8d8" stroke-width="0.9" stroke-dasharray="1 3"/></svg>
<div class="a" style="right:364px;top:121.10px;font-size:9px;line-height:10px;color:#7a7a7a;text-align:right">10</div>
<svg class="a" style="left:667px;top:124.30px" width="328" height="2"><path d="M0 1 H328" stroke="#d8d8d8" stroke-width="0.9" stroke-dasharray="1 3"/></svg>
<div class="a" style="left:673.10px;top:84.30px;width:12.3px;height:451.00px;background:#118dff"></div>
<div class="a" style="right:353.50px;top:538.20px;font-size:9px;line-height:9px;color:#7a7a7a;transform-origin:100% 0;transform:rotate(-45deg)">CA</div>
<div class="a" style="left:688.34px;top:248.30px;width:12.3px;height:287.00px;background:#118dff"></div>
<div class="a" style="right:338.26px;top:538.20px;font-size:9px;line-height:9px;color:#7a7a7a;transform-origin:100% 0;transform:rotate(-45deg)">PA</div>
<div class="a" style="left:703.57px;top:412.30px;width:12.3px;height:123.00px;background:#118dff"></div>
<div class="a" style="right:323.03px;top:538.20px;font-size:9px;line-height:9px;color:#7a7a7a;transform-origin:100% 0;transform:rotate(-45deg)">TX</div>
<div class="a" style="left:718.81px;top:412.30px;width:12.3px;height:123.00px;background:#118dff"></div>
<div class="a" style="right:307.79px;top:538.20px;font-size:9px;line-height:9px;color:#7a7a7a;transform-origin:100% 0;transform:rotate(-45deg)">VA</div>
<div class="a" style="left:734.04px;top:412.30px;width:12.3px;height:123.00px;background:#118dff"></div>
<div class="a" style="right:292.56px;top:538.20px;font-size:9px;line-height:9px;color:#7a7a7a;transform-origin:100% 0;transform:rotate(-45deg)">WA</div>
<div class="a" style="left:749.27px;top:453.30px;width:12.3px;height:82.00px;background:#118dff"></div>
<div class="a" style="right:277.33px;top:538.20px;font-size:9px;line-height:9px;color:#7a7a7a;transform-origin:100% 0;transform:rotate(-45deg)">CT</div>
<div class="a" style="left:764.51px;top:453.30px;width:12.3px;height:82.00px;background:#118dff"></div>
<div class="a" style="right:262.09px;top:538.20px;font-size:9px;line-height:9px;color:#7a7a7a;transform-origin:100% 0;transform:rotate(-45deg)">MA</div>
<div class="a" style="left:779.75px;top:453.30px;width:12.3px;height:82.00px;background:#118dff"></div>
<div class="a" style="right:246.86px;top:538.20px;font-size:9px;line-height:9px;color:#7a7a7a;transform-origin:100% 0;transform:rotate(-45deg)">MI</div>
<div class="a" style="left:794.98px;top:453.30px;width:12.3px;height:82.00px;background:#118dff"></div>
<div class="a" style="right:231.62px;top:538.20px;font-size:9px;line-height:9px;color:#7a7a7a;transform-origin:100% 0;transform:rotate(-45deg)">MN</div>
<div class="a" style="left:810.22px;top:453.30px;width:12.3px;height:82.00px;background:#118dff"></div>
<div class="a" style="right:216.38px;top:538.20px;font-size:9px;line-height:9px;color:#7a7a7a;transform-origin:100% 0;transform:rotate(-45deg)">OH</div>
<div class="a" style="left:825.45px;top:453.30px;width:12.3px;height:82.00px;background:#118dff"></div>
<div class="a" style="right:201.15px;top:538.20px;font-size:9px;line-height:9px;color:#7a7a7a;transform-origin:100% 0;transform:rotate(-45deg)">WI</div>
<div class="a" style="left:840.68px;top:494.30px;width:12.3px;height:41.00px;background:#118dff"></div>
<div class="a" style="right:185.92px;top:538.20px;font-size:9px;line-height:9px;color:#7a7a7a;transform-origin:100% 0;transform:rotate(-45deg)">AZ</div>
<div class="a" style="left:855.92px;top:494.30px;width:12.3px;height:41.00px;background:#118dff"></div>
<div class="a" style="right:170.68px;top:538.20px;font-size:9px;line-height:9px;color:#7a7a7a;transform-origin:100% 0;transform:rotate(-45deg)">FL</div>
<div class="a" style="left:871.15px;top:494.30px;width:12.3px;height:41.00px;background:#118dff"></div>
<div class="a" style="right:155.45px;top:538.20px;font-size:9px;line-height:9px;color:#7a7a7a;transform-origin:100% 0;transform:rotate(-45deg)">GA</div>
<div class="a" style="left:886.39px;top:494.30px;width:12.3px;height:41.00px;background:#118dff"></div>
<div class="a" style="right:140.21px;top:538.20px;font-size:9px;line-height:9px;color:#7a7a7a;transform-origin:100% 0;transform:rotate(-45deg)">IL</div>
<div class="a" style="left:901.62px;top:494.30px;width:12.3px;height:41.00px;background:#118dff"></div>
<div class="a" style="right:124.98px;top:538.20px;font-size:9px;line-height:9px;color:#7a7a7a;transform-origin:100% 0;transform:rotate(-45deg)">IN</div>
<div class="a" style="left:916.86px;top:494.30px;width:12.3px;height:41.00px;background:#118dff"></div>
<div class="a" style="right:109.74px;top:538.20px;font-size:9px;line-height:9px;color:#7a7a7a;transform-origin:100% 0;transform:rotate(-45deg)">MD</div>
<div class="a" style="left:932.10px;top:494.30px;width:12.3px;height:41.00px;background:#118dff"></div>
<div class="a" style="right:94.50px;top:538.20px;font-size:9px;line-height:9px;color:#7a7a7a;transform-origin:100% 0;transform:rotate(-45deg)">NE</div>
<div class="a" style="left:947.33px;top:494.30px;width:12.3px;height:41.00px;background:#118dff"></div>
<div class="a" style="right:79.27px;top:538.20px;font-size:9px;line-height:9px;color:#7a7a7a;transform-origin:100% 0;transform:rotate(-45deg)">NJ</div>
<div class="a" style="left:962.57px;top:494.30px;width:12.3px;height:41.00px;background:#118dff"></div>
<div class="a" style="right:64.03px;top:538.20px;font-size:9px;line-height:9px;color:#7a7a7a;transform-origin:100% 0;transform:rotate(-45deg)">SC</div>
<div class="a" style="left:977.80px;top:494.30px;width:12.3px;height:41.00px;background:#118dff"></div>
<div class="a" style="right:48.80px;top:538.20px;font-size:9px;line-height:9px;color:#7a7a7a;transform-origin:100% 0;transform:rotate(-45deg)">VT</div>
<div class="a" style="left:636.9px;top:339.4px;font-size:10px;line-height:10px;-webkit-text-stroke:0.25px #3b3a39;color:#3b3a39;transform-origin:0 0;transform:rotate(-90deg)">Sum of Units</div>
<div class="a" style="left:819.8px;top:563px;font-size:10px;line-height:11px;-webkit-text-stroke:0.25px #3b3a39;color:#3b3a39">State</div>
</body></html>
